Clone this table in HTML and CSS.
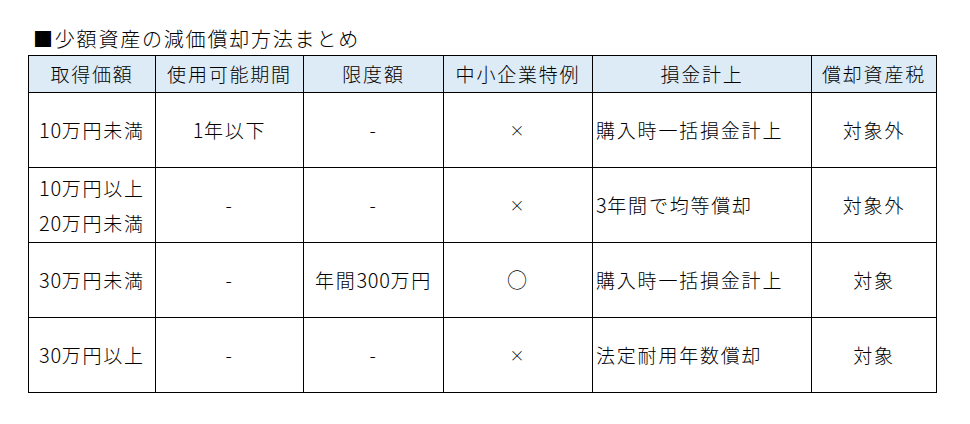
FILE: index.html
```html
<!DOCTYPE html>
<html lang="ja">
<head>
<meta charset="utf-8">
<link rel="stylesheet" href="styles.css">
</head>
<body>
<div class="title">■少額資産の減価償却方法まとめ</div>
<table class="summary">
  <colgroup>
    <col class="c1"><col class="c2"><col class="c3"><col class="c4"><col class="c5"><col class="c6">
  </colgroup>
  <thead>
    <tr class="head">
      <th>取得価額</th><th>使用可能期間</th><th>限度額</th><th>中小企業特例</th><th>損金計上</th><th>償却資産税</th>
    </tr>
  </thead>
  <tbody>
    <tr>
      <td><span class="num">10</span>万円未満</td><td><span class="num">1</span>年以下</td><td class="dash">-</td><td class="mark">×</td><td class="left">購入時一括損金計上</td><td>対象外</td>
    </tr>
    <tr>
      <td class="two"><span class="num">10</span>万円以上<br><span class="num">20</span>万円未満</td><td class="dash">-</td><td class="dash">-</td><td class="mark">×</td><td class="left"><span class="num">3</span>年間で均等償却</td><td>対象外</td>
    </tr>
    <tr>
      <td><span class="num">30</span>万円未満</td><td class="dash">-</td><td>年間<span class="num">300</span>万円</td><td class="circle">○</td><td class="left">購入時一括損金計上</td><td>対象</td>
    </tr>
    <tr>
      <td><span class="num">30</span>万円以上</td><td class="dash">-</td><td class="dash">-</td><td class="mark">×</td><td class="left">法定耐用年数償却</td><td>対象</td>
    </tr>
  </tbody>
</table>
</body>
</html>
```
FILE: styles.css
```css
html, body {
  margin: 0;
  padding: 0;
  background: #ffffff;
}
body {
  font-family: "Noto Sans CJK JP", "Noto Sans", sans-serif;
  font-weight: 300;
  color: #000000;
  width: 970px;
  height: 424px;
  overflow: hidden;
}
.title {
  padding: 27px 0 0 33px;
  font-size: 20px;
  line-height: 24px;
  letter-spacing: 1.8px;
  height: 25px;
}
.summary {
  margin: 3px 0 0 28px;
  border-collapse: collapse;
  table-layout: fixed;
  width: 908px;
  font-size: 19px;
  letter-spacing: 1.8px;
}
.c1 { width: 127px; }
.c2 { width: 148px; }
.c3 { width: 140px; }
.c4 { width: 149px; }
.c5 { width: 219px; }
.c6 { width: 125px; }
.summary th,
.summary td {
  border: 1px solid #000000;
  padding: 0;
  text-align: center;
  vertical-align: middle;
  white-space: nowrap;
  overflow: hidden;
  font-weight: 300;
}
.num {
  letter-spacing: 0.6px;
  font-size: 20px;
}
.head th {
  background: #ddebf7;
  height: 36px;
  line-height: 24px;
}
.summary tbody td {
  height: 74px;
  line-height: 24px;
}
.summary td.two {
  line-height: 35px;
}
.summary td.left {
  text-align: left;
  padding-left: 3px;
}
.summary td.mark {
  font-size: 15px;
}
.summary td.circle {
  font-size: 20px;
}
```
